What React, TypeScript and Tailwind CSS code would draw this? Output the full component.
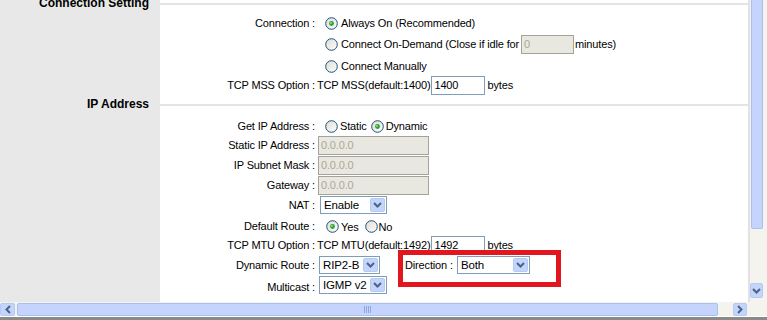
import React from 'react'

function Radio({ checked }: { checked?: boolean }) {
  return (
    <svg width="13" height="13" viewBox="0 0 13 13" className="shrink-0">
      <defs>
        <linearGradient id="rg" x1="0" y1="0" x2="1" y2="1">
          <stop offset="0" stopColor="#dcdad0" />
          <stop offset="1" stopColor="#ffffff" />
        </linearGradient>
      </defs>
      <circle cx="6.5" cy="6.5" r="5.8" fill="url(#rg)" stroke="#1c5180" strokeWidth="1" />
      {checked && <circle cx="6.5" cy="6.5" r="2.4" fill="#2ca12c" />}
      {checked && <circle cx="6" cy="6" r="1" fill="#8be28b" />}
    </svg>
  )
}

function Chevron() {
  return (
    <svg width="9" height="6" viewBox="0 0 9 6">
      <polyline points="1,1 4.5,4.5 8,1" fill="none" stroke="#4d6185" strokeWidth="2" />
    </svg>
  )
}

function Select({ value, w }: { value: string; w: string }) {
  return (
    <div className={`flex h-[18px] items-center border border-[#7f9db9] bg-white ${w}`}>
      <span className="flex-1 whitespace-nowrap pl-[3px] text-[11.5px] leading-[14px] text-black">{value}</span>
      <span className="mr-[1px] flex h-[14px] w-[15px] shrink-0 items-center justify-center rounded-[2px] border border-[#b6c9f4] bg-[#c4d5fc]">
        <Chevron />
      </span>
    </div>
  )
}

function TextInput({ value, w, disabled }: { value: string; w: string; disabled?: boolean }) {
  return (
    <div
      className={`flex h-[19px] items-center border pl-[2px] text-[11px] ${w} ${
        disabled ? 'border-[#a4a29a] bg-[#e8e7e0] text-[#aca899]' : 'border-[#7f9db9] bg-white text-black'
      }`}
    >
      {value}
    </div>
  )
}

function Row({ label, h, children, labelEnd, pt }: { label: string; h: string; children?: React.ReactNode; labelEnd?: boolean; pt?: string }) {
  return (
    <div className={`grid grid-cols-[160px_157px_1fr] ${h}`}>
      <div />
      <div className={`flex justify-end pr-[2px] ${labelEnd ? 'items-end pb-[1px]' : 'items-center'} ${pt ?? ''}`}>{label}</div>
      <div className={`flex items-center ${pt ?? ''}`}>{children}</div>
    </div>
  )
}

function Header({ title, h }: { title: string; h: string }) {
  return (
    <div className={`grid grid-cols-[160px_1fr] ${h}`}>
      <div className="flex items-center justify-end pr-[11px] text-[12px] font-bold tracking-normal text-black">{title}</div>
      <div className="flex items-center">
        <div className="h-[2px] w-full bg-[#e4e4e4]" />
      </div>
    </div>
  )
}

export default function App() {
  return (
    <div className="relative flex h-[320px] w-[767px] flex-col overflow-hidden bg-white font-['Liberation_Sans',Arial,sans-serif] text-[11px] leading-[13px] tracking-[-0.15px] text-black">
      <div className="flex h-[302px]">
        <div className="h-full w-[748px] overflow-hidden bg-[linear-gradient(to_right,#e8e8e8_160px,#ffffff_160px)]">
          <div className="-mt-[6px]">
            <Header title="Connection Setting" h="h-[19px]" />
            <Row label="Connection :" h="h-[21px]">
              <span className="ml-[8px] mr-[3px] flex"><Radio checked /></span>
              <span>Always On (Recommended)</span>
            </Row>
            <Row label="" h="h-[21px]">
              <span className="ml-[8px] mr-[3px] flex"><Radio /></span>
              <span>Connect On-Demand (Close if idle for</span>
              <span className="ml-[2px] mr-[1px]"><TextInput value="0" w="w-[53px]" disabled /></span>
              <span>minutes)</span>
            </Row>
            <Row label="" h="h-[21px]" pt="pt-[2px]">
              <span className="ml-[8px] mr-[3px] flex"><Radio /></span>
              <span>Connect Manually</span>
            </Row>
            <Row label="TCP MSS Option :" h="h-[19px]">
              <span>TCP MSS(default:1400)</span>
              <span className="ml-[1px] mr-[2px]"><TextInput value="1400" w="w-[54px]" /></span>
              <span>bytes</span>
            </Row>
            <Header title="IP Address" h="h-[19px]" />
            <Row label="Get IP Address :" h="h-[21px]" pt="pt-[4px]">
              <span className="ml-[8px] mr-[2px] flex"><Radio /></span>
              <span>Static</span>
              <span className="ml-[4px] mr-[2px] flex"><Radio checked /></span>
              <span>Dynamic</span>
            </Row>
            <Row label="Static IP Address :" h="h-[20px]">
              <span className="ml-[1px]"><TextInput value="0.0.0.0" w="w-[111px]" disabled /></span>
            </Row>
            <Row label="IP Subnet Mask :" h="h-[20px]">
              <span className="ml-[1px]"><TextInput value="0.0.0.0" w="w-[111px]" disabled /></span>
            </Row>
            <Row label="Gateway :" h="h-[20px]">
              <span className="ml-[1px]"><TextInput value="0.0.0.0" w="w-[111px]" disabled /></span>
            </Row>
            <Row label="NAT :" h="h-[20px]">
              <span className="ml-[3px]"><Select value="Enable" w="w-[67px]" /></span>
            </Row>
            <Row label="Default Route :" h="h-[20px]" pt="pt-[2px]">
              <span className="ml-[9px] mr-[2px] flex"><Radio checked /></span>
              <span className="pt-[3px]">Yes</span>
              <span className="ml-[6px] mr-[1px] flex"><Radio /></span>
              <span className="pt-[3px]">No</span>
            </Row>
            <Row label="TCP MTU Option :" h="h-[20px]">
              <span>TCP MTU(default:1492)</span>
              <span className="ml-[1px] mr-[2px]"><TextInput value="1492" w="w-[54px]" /></span>
              <span>bytes</span>
            </Row>
            <Row label="Dynamic Route :" h="h-[20px]">
              <span className="ml-[2px]"><Select value="RIP2-B" w="w-[61px]" /></span>
              <span className="ml-[25px] mr-[4px]">Direction :</span>
              <Select value="Both" w="w-[73px]" />
            </Row>
            <Row label="Multicast :" h="h-[20px]" labelEnd>
              <span className="ml-[2px]"><Select value="IGMP v2" w="w-[68px]" /></span>
            </Row>
          </div>
        </div>
        <div className="w-[2px] bg-[#e2e2e2]" />
        <div className="flex w-[17px] flex-col bg-[#f4f3ee]">
          <div className="ml-[1px] h-[229px] w-[12px] rounded-b-[2px] border-x border-b border-[#a9bfee] bg-[#c4d4fc]" />
          <div className="flex-1" />
          <div className="mb-[4px] flex h-[15px] w-[13px] items-center justify-center rounded-[2px] border border-[#b6c9f4] bg-[#c4d5fc]">
            <Chevron />
          </div>
        </div>
      </div>
      <div className="flex h-[14px] items-center bg-[#f4f3ee]">
        <div className="flex h-[13px] w-[15px] items-center justify-center rounded-[2px] border border-[#b6c9f4] bg-[#c4d5fc]">
          <svg width="6" height="9" viewBox="0 0 6 9">
            <polyline points="5,1 1.5,4.5 5,8" fill="none" stroke="#4d6185" strokeWidth="2" />
          </svg>
        </div>
        <div className="ml-[2px] flex h-[13px] w-[701px] items-center justify-center rounded-[2px] border border-[#a9bfee] bg-[#c4d4fc]">
          <div className="flex gap-[1px]">
            <div className="h-[7px] w-[1px] bg-[#8ca6e0]" />
            <div className="h-[7px] w-[1px] bg-[#8ca6e0]" />
            <div className="h-[7px] w-[1px] bg-[#8ca6e0]" />
            <div className="h-[7px] w-[1px] bg-[#8ca6e0]" />
          </div>
        </div>
        <div className="w-[15px]" />
        <div className="flex h-[13px] w-[14px] items-center justify-center rounded-[2px] border border-[#b6c9f4] bg-[#c4d5fc]">
          <svg width="6" height="9" viewBox="0 0 6 9">
            <polyline points="1,1 4.5,4.5 1,8" fill="none" stroke="#4d6185" strokeWidth="2" />
          </svg>
        </div>
      </div>
      <div className="h-[1px] bg-white" />
      <div className="h-[3px] bg-[#8a8a8a]" />
      <div className="absolute left-[398px] top-[250px] h-[37px] w-[163px] border-[5px] border-[#e2161e]" />
    </div>
  )
}
